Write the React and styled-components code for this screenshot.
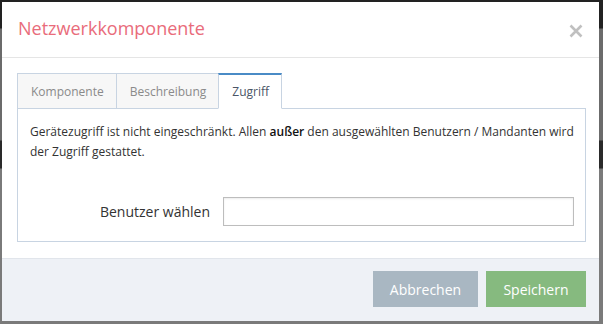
import React from 'react'
import styled, {createGlobalStyle} from 'styled-components'

const GlobalStyle = createGlobalStyle`
	html, body {
		margin: 0;
		padding: 0;
		background: #4e4e4e;
		font-family: "Open Sans", "Noto Sans", sans-serif;
	}
	* { box-sizing: border-box; }
`

const App = () => (
	<>
		<GlobalStyle />
		<Backdrop>
			<Modal>
				{/* Header */}
				<Header>
					<Title>Netzwerkkomponente</Title>
					<CloseButton aria-label="Schließen">
						<svg width="14" height="14" viewBox="0 0 14 14">
							<path d="M1.5 1.5 L12.5 12.5 M12.5 1.5 L1.5 12.5" stroke="#c0c0c0" strokeWidth="2.6" />
						</svg>
					</CloseButton>
				</Header>

				<Body>
					{/* Tabs */}
					<TabBar>
						<Tab>Komponente</Tab>
						<Tab>Beschreibung</Tab>
						<Tab active>Zugriff</Tab>
					</TabBar>

					<Panel>
						<Info>
							Gerätezugriff ist nicht eingeschränkt. Allen <b>außer</b> den ausgewählten Benutzern / Mandanten wird der Zugriff gestattet.
						</Info>
						<FormRow>
							<Label>Benutzer wählen</Label>
							<Input type="text" />
						</FormRow>
					</Panel>
				</Body>

				{/* Footer */}
				<Footer>
					<Button variant="cancel">Abbrechen</Button>
					<Button variant="save">Speichern</Button>
				</Footer>
			</Modal>
		</Backdrop>
	</>
)

const Backdrop = styled.div`
	width: 603px;
	height: 324px;
	padding: 2px 4px 3px 2px;
	background: linear-gradient(to bottom, #222 0px, #222 28px, #6b6b6b 29px, #6b6b6b 140px, #2a2a2a 141px, #2a2a2a 168px, #7a7a7a 169px);
`

const Modal = styled.div`
	width: 100%;
	height: 100%;
	background: #fff;
	display: flex;
	flex-direction: column;
`

const Header = styled.div`
	height: 56px;
	flex-shrink: 0;
	display: flex;
	align-items: center;
	justify-content: space-between;
	padding: 0 16px 0 16px;
	border-bottom: 1px solid #e5e5e5;
`

const Title = styled.h4`
	margin: -4px 0 0;
	font-size: 18px;
	font-weight: 400;
	color: #e96c7b;
`

const CloseButton = styled.button`
	border: none;
	background: none;
	padding: 0;
	margin-top: 3px;
	display: flex;
	cursor: pointer;
`

const Body = styled.div`
	padding: 15px 13px 16px 15px;
`

const TabBar = styled.div`
	display: flex;
	position: relative;
	z-index: 1;
`

const Tab = styled.div`
	height: 36px;
	padding: 0 12px 0 13px;
	display: flex;
	align-items: center;
	font-size: 12px;
	color: ${p => p.active ? '#4b5667' : '#8a8a8a'};
	background: ${p => p.active ? '#fff' : '#f7f7f7'};
	border: 1px solid #c8d4e2;
	border-top: ${p => p.active ? '2px solid #4a8bc6' : '1px solid #c8d4e2'};
	border-bottom: ${p => p.active ? '1px solid #fff' : '1px solid #c8d4e2'};
	margin-right: -1px;
	padding-top: ${p => p.active ? '0' : '1px'};
`

const Panel = styled.div`
	margin-top: -1px;
	border: 1px solid #c8d4e2;
	padding: 13px 11px 15px 12px;
`

const Info = styled.p`
	margin: 0;
	font-size: 12px;
	line-height: 20px;
	color: #333;

	b { font-weight: 600; color: #111; }
`

const FormRow = styled.div`
	display: flex;
	align-items: center;
	margin-top: 35px;
	gap: 13px;
`

const Label = styled.label`
	width: 180px;
	text-align: right;
	font-size: 14px;
	color: #333;
`

const Input = styled.input`
	flex: 1;
	height: 29px;
	border: 1px solid #bdbdbd;
	box-shadow: inset 0 1px 2px rgba(0, 0, 0, 0.08);
	outline: none;
	font-family: inherit;
	font-size: 13px;
	padding: 0 8px;
`

const Footer = styled.div`
	flex: 1;
	background: #eef1f6;
	border-top: 1px solid #e1e5eb;
	display: flex;
	justify-content: flex-end;
	align-items: flex-start;
	gap: 8px;
	padding: 12px 13px 0 0;
`

const Button = styled.button`
	height: 36px;
	padding: 0 16px;
	border: none;
	font-family: inherit;
	font-size: 14px;
	color: #fff;
	cursor: pointer;
	background: ${p => p.variant === 'save' ? '#86ba7f' : '#a9b7c2'};
	min-width: ${p => p.variant === 'save' ? '100px' : '105px'};
`

export default App
